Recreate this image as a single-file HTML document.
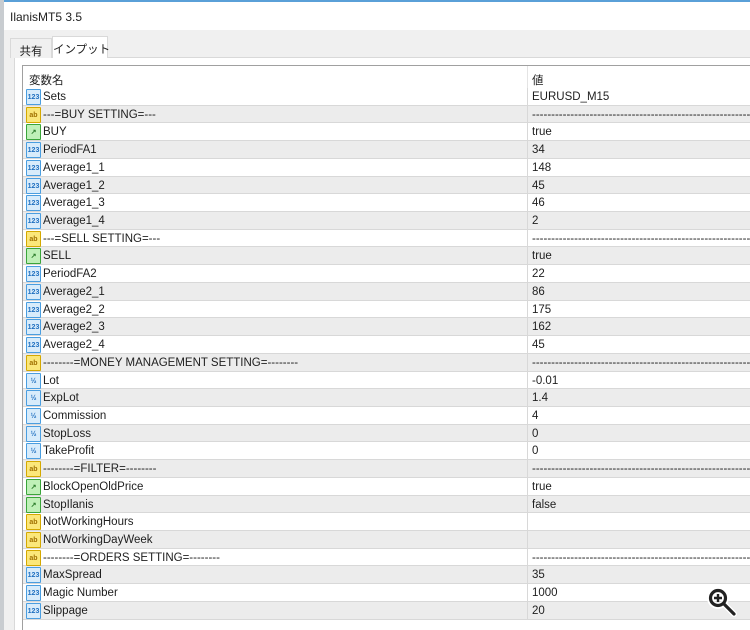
<!DOCTYPE html>
<html><head><meta charset="utf-8"><style>
*{margin:0;padding:0;box-sizing:border-box}
html{width:750px;height:630px;overflow:hidden}
body{width:750px;height:630px;overflow:hidden;background:#f0f0f0;font-family:"Liberation Sans","Noto Sans CJK JP",sans-serif;font-size:11.5px;color:#1e1e1e;position:relative}
#strip{position:absolute;left:0;top:0;width:4px;height:630px;background:#c8ccd0}
#title{position:absolute;left:4px;top:0;width:746px;height:30px;background:#fff;border-top:2px solid #5aa0d8}
#title span{position:absolute;left:6px;top:8px;font-size:12px}
#tabs{position:absolute;left:4px;top:30px;width:746px;height:600px;background:#f0f0f0;overflow:hidden}
.tab{position:absolute;height:20px;border:1px solid #d9d9d9;border-bottom:none;font-size:11.5px;padding:4px 0 0;text-align:center;white-space:nowrap}
#panel{position:absolute;left:10px;top:27px;width:740px;height:580px;background:#fff;border:1px solid #d9d9d9}
#grid{position:absolute;left:22px;top:65px;width:728px;height:565px;border:1px solid #a0a0a0;border-right:none;border-bottom:none;background:#fff;overflow:hidden}
.row{position:absolute;left:0;width:728px;height:17.72px;border-bottom:1px solid #d8d8d8}
.g{background:#ececec}
.n{position:absolute;left:20px;top:3px;white-space:nowrap}
.v{position:absolute;left:504px;top:0;height:100%;border-left:1px solid #d8d8d8;padding:3px 0 0 4px;white-space:nowrap;width:224px;overflow:hidden}
.ic{position:absolute;left:3px;top:1px;width:15px;height:16px;border-radius:1px;font-size:7px;font-weight:bold;text-align:center;line-height:15px;font-family:"Liberation Sans",sans-serif}
.b{background:#d8ecfb;border:1px solid #4a9ee0;color:#2070c0}
.y{background:#fbe77a;border:1px solid #d4a800;color:#a07000}
.gr{background:#bff0b8;border:1px solid #3aa53a;color:#2a7a2a}
</style></head><body>
<div id="strip"></div>
<div id="title"><span>IlanisMT5 3.5</span></div>
<div id="tabs">
<div id="panel"></div>
<div class="tab" style="left:6px;top:8px;width:42px;height:20px;background:#f0f0f0">共有</div>
<div class="tab" style="left:48px;top:6px;width:56px;height:22px;background:#fff">インプット</div>
</div>
<div id="grid">
<div class="row" style="top:0;height:22px;border-bottom:none"><span class="n" style="left:6px;top:6px">変数名</span><span class="v" style="top:0;padding-top:6px;border-left:1px solid #e4e4e4">値</span></div>
<div id="rows"></div>
</div>
<svg style="position:absolute;left:705px;top:585px" width="40" height="40" viewBox="705 585 40 40">
<g fill="none" stroke="#fff" stroke-width="6" stroke-linecap="round"><circle cx="718" cy="598" r="8"/><line x1="724" y1="604" x2="734" y2="614"/></g>
<g fill="none" stroke="#222" stroke-width="3.2" stroke-linecap="round"><circle cx="718" cy="598" r="7.5"/><line x1="724" y1="604" x2="734" y2="614"/></g>
<path d="M718 594v8M714 598h8" stroke="#222" stroke-width="2.4"/>
</svg>
<script>
var d=[["b","123","Sets","EURUSD_M15"],["y","ab","---=BUY SETTING=---","-"],["gr","t","BUY","true"],["b","123","PeriodFA1","34"],["b","123","Average1_1","148"],["b","123","Average1_2","45"],["b","123","Average1_3","46"],["b","123","Average1_4","2"],["y","ab","---=SELL SETTING=---","-"],["gr","t","SELL","true"],["b","123","PeriodFA2","22"],["b","123","Average2_1","86"],["b","123","Average2_2","175"],["b","123","Average2_3","162"],["b","123","Average2_4","45"],["y","ab","--------=MONEY MANAGEMENT SETTING=--------","-"],["b","½","Lot","-0.01"],["b","½","ExpLot","1.4"],["b","½","Commission","4"],["b","½","StopLoss","0"],["b","½","TakeProfit","0"],["y","ab","--------=FILTER=--------","-"],["gr","t","BlockOpenOldPrice","true"],["gr","t","StopIlanis","false"],["y","ab","NotWorkingHours",""],["y","ab","NotWorkingDayWeek",""],["y","ab","--------=ORDERS SETTING=--------","-"],["b","123","MaxSpread","35"],["b","123","Magic Number","1000"],["b","123","Slippage","20"]];
var h="";var dash=new Array(80).join("-");
for(var i=0;i<d.length;i++){var r=d[i];var ic=r[1]=="t"?"↗":r[1];
h+='<div class="row'+(i%2?' g':'')+'" style="top:'+(22+i*17.72)+'px"><div class="ic '+r[0]+'">'+ic+'</div><span class="n">'+r[2]+'</span><span class="v">'+(r[3]=="-"?dash:r[3])+'</span></div>';}
document.getElementById("rows").innerHTML=h;
</script>
</body></html>
